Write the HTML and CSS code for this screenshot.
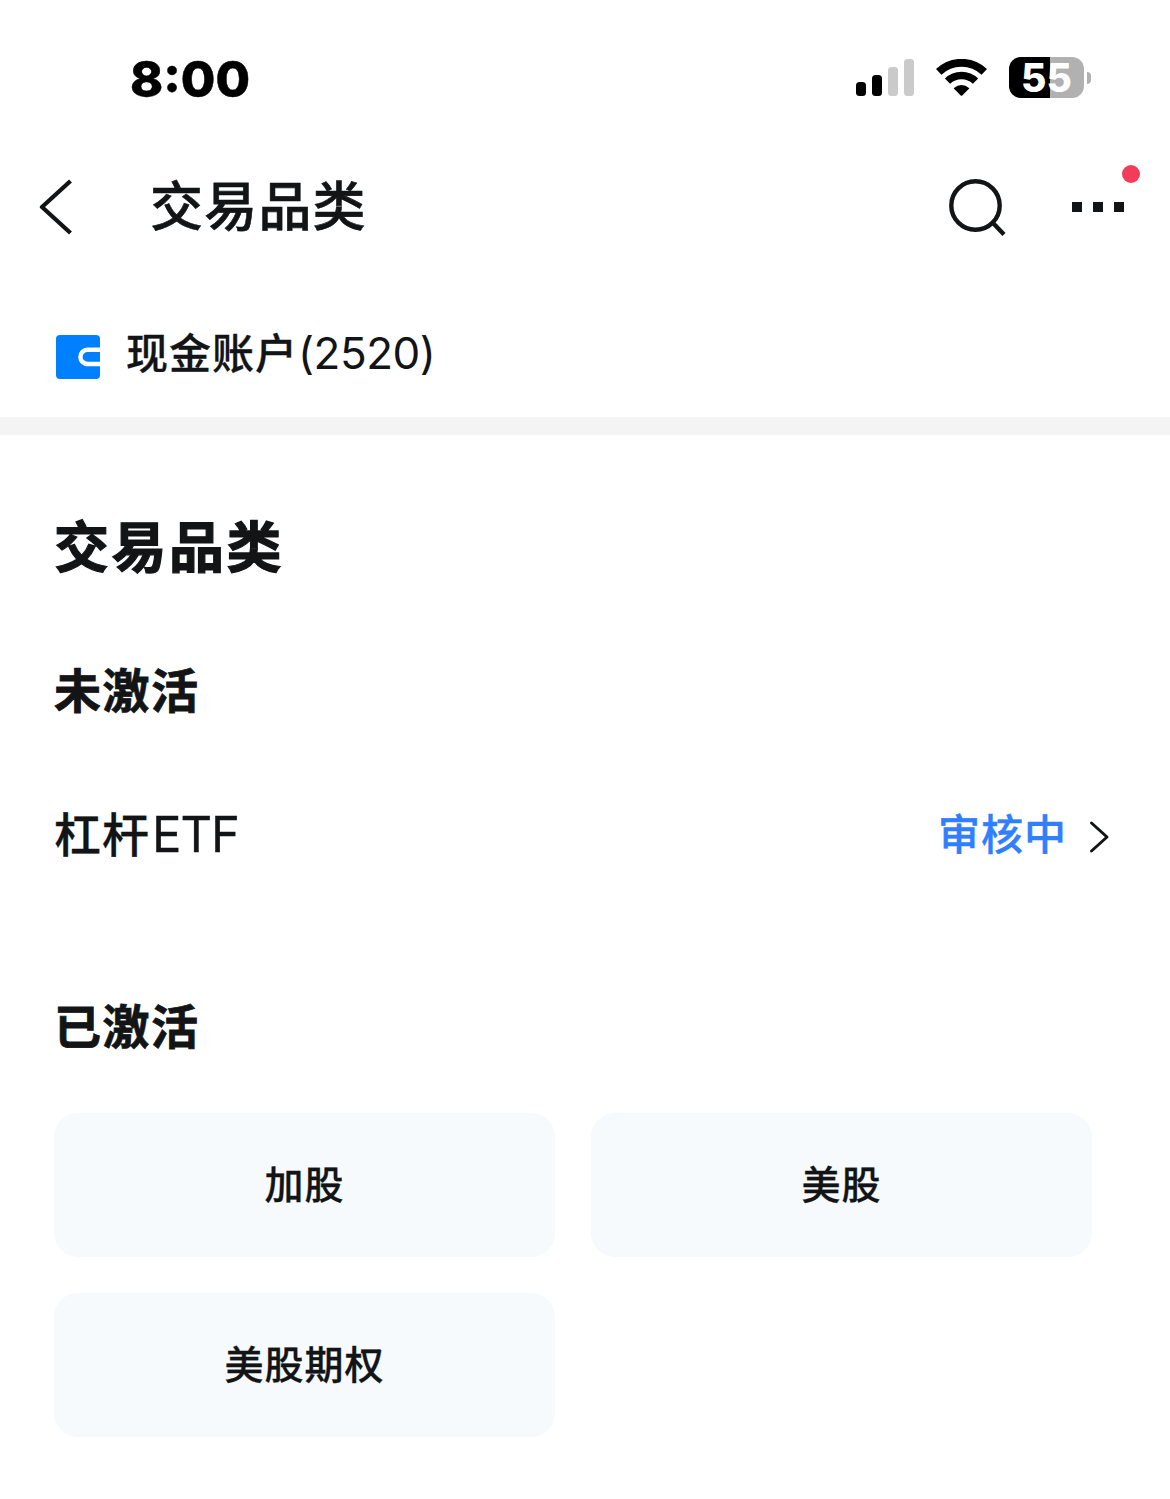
FILE: index.html
```
<!DOCTYPE html>
<html lang="zh-CN">

<head>
    <meta charset="UTF-8">
    <meta name="viewport" content="width=device-width, initial-scale=1.0">
    <title>交易品类</title>
    <link rel="stylesheet" href="styles.css">
</head>

<body>
    <!-- Status bar -->
    <div class="status-bar">
        <span class="time">8:00</span>
        <div class="status-icons">
            <svg class="signal" width="58" height="38" viewBox="0 0 58 38">
                <rect x="0" y="23" width="10" height="14" rx="3.5" />
                <rect x="16" y="16" width="10" height="21" rx="3.5" />
                <rect class="off" x="32" y="8" width="10" height="29" rx="3.5" />
                <rect class="off" x="48" y="0" width="10" height="37" rx="3.5" />
            </svg>
            <svg class="wifi" width="52" height="38" viewBox="0 0 52 38">
                <path d="M2.700 12.900A33 33 0 0 1 48.300 12.900" fill="none" stroke="#000" stroke-width="7.800" />
                <path d="M11.500 22.200A20 20 0 0 1 39.500 22.200" fill="none" stroke="#000" stroke-width="7.400" />
                <path d="M17.600 29.300Q25.500 22.700 33.400 29.300L26.500 36.300Q25.500 37.300 24.500 36.300Z" />
            </svg>
            <div class="battery">
                <div class="battery-body">55</div>
                <div class="battery-cap"></div>
            </div>
        </div>
    </div>

    <!-- Nav bar -->
    <div class="nav">
        <svg class="back" width="34" height="56" viewBox="0 0 34 56">
            <path d="M31.500 2L3 28L31.500 54" fill="none" stroke="#121416" stroke-width="4.300" stroke-linejoin="round" />
        </svg>
        <div class="nav-title">交易品类</div>
        <svg class="search" width="58" height="58" viewBox="0 0 58 58">
            <circle cx="26.500" cy="26.500" r="24.200" fill="none" stroke="#121416" stroke-width="4.400" />
            <path d="M43.500 43.500L55 55.500" stroke="#121416" stroke-width="4.400" />
        </svg>
        <div class="more">
            <i></i><i></i><i></i>
            <span class="badge"></span>
        </div>
    </div>

    <!-- Account -->
    <div class="account">
        <svg width="44" height="44" viewBox="0 0 44 44">
            <rect width="44" height="44" rx="4" fill="#0080ff" />
            <path d="M44 14.800H31.500A7 7 0 0 0 31.500 29H44" fill="none" stroke="#fff" stroke-width="4.400" />
        </svg>
        <div class="account-name">现金账户<span class="account-no">(2520)</span></div>
    </div>
    <div class="divider"></div>

    <div class="content">
        <h1>交易品类</h1>

        <h2>未激活</h2>
        <div class="row">
            <div class="row-name">杠杆<span class="latin">ETF</span></div>
            <div class="row-status">审核中</div>
            <svg class="arrow" width="22" height="34" viewBox="0 0 22 34">
                <path d="M2.500 3L18 17L2.500 31" fill="none" stroke="#121416" stroke-width="3" stroke-linecap="round" stroke-linejoin="round" />
            </svg>
        </div>

        <h2 class="active-title">已激活</h2>
        <div class="cards">
            <div class="card">加股</div>
            <div class="card">美股</div>
            <div class="card">美股期权</div>
        </div>
    </div>
</body>

</html>
```
FILE: styles.css
```
* {
    box-sizing: border-box;
}

body {
    margin: 0;
    min-height: 1499px;
    background-color: #fff;
    color: #121416;
    font-family: "Noto Sans CJK SC", sans-serif;
}

svg {
    display: block;
    flex-shrink: 0;
}

/* Status bar */
.status-bar {
    height: 136px;
    padding: 19px 79px 0 130px;
    display: flex;
    align-items: center;
    justify-content: space-between;
    color: #000;
}

.time {
    padding-top: 2px;
    font-family: Inter, sans-serif;
    font-size: 50px;
    font-weight: 800;
    line-height: 60px;
    -webkit-text-stroke: 0.5px;
}

.status-icons {
    display: flex;
    align-items: center;
}

.signal {
    margin-right: 22px;
}

.signal .off {
    fill: #cacaca;
}

.wifi {
    margin-right: 21px;
}

.battery {
    display: flex;
    align-items: center;
    gap: 3px;
}

.battery-body {
    width: 75px;
    height: 41px;
    border-radius: 12px;
    background: linear-gradient(to right, #000 41px, #b1b1b1 41px);
    color: #fff;
    font-family: Inter, sans-serif;
    font-size: 39px;
    font-weight: 800;
    line-height: 42px;
    text-align: center;
}

.battery-cap {
    width: 4px;
    height: 12px;
    border-radius: 0 4px 4px 0;
    background-color: #b1b1b1;
}

/* Nav bar */
.nav {
    height: 142px;
    padding: 0 46px 0 39px;
    display: flex;
    align-items: center;
}

.nav-title {
    flex: 1;
    margin-left: 77px;
    padding-bottom: 8px;
    font-size: 53px;
    font-weight: 500;
    line-height: 72px;
    letter-spacing: 1.2px;
    -webkit-text-stroke: 0.6px;
}

.search {
    margin: 1px 65px 0 0;
}

.more {
    position: relative;
    display: flex;
    gap: 11px;
}

.more i {
    width: 10px;
    height: 10px;
    background-color: #121416;
}

.badge {
    position: absolute;
    top: -37px;
    right: -16px;
    width: 18px;
    height: 18px;
    border-radius: 50%;
    background-color: #f23c58;
}

/* Account */
.account {
    height: 139px;
    padding: 18px 56px 0;
    display: flex;
    align-items: center;
    gap: 26px;
}

.account-name {
    padding-bottom: 9px;
    font-size: 42px;
    font-weight: 500;
    line-height: 60px;
    letter-spacing: 1px;
    -webkit-text-stroke: 0.3px;
}

.account-no {
    font-family: Inter, sans-serif;
    font-size: 44px;
    font-weight: 400;
    letter-spacing: -0.5px;
    -webkit-text-stroke: 0;
}

.divider {
    height: 18px;
    background-color: #f4f4f4;
}

/* Content */
.content {
    padding: 68px 54px 0;
}

h1 {
    margin: 0;
    font-size: 55px;
    font-weight: 700;
    line-height: 80px;
    letter-spacing: 2.5px;
    -webkit-text-stroke: 1.2px;
}

h2 {
    margin: 71px 0 0;
    font-size: 47px;
    font-weight: 700;
    line-height: 68px;
    letter-spacing: 1.5px;
    -webkit-text-stroke: 0.8px;
}

.row {
    height: 72px;
    margin-top: 76px;
    padding-right: 5px;
    display: flex;
    align-items: center;
}

.row-name {
    flex: 1;
    padding-bottom: 2px;
    font-size: 47px;
    font-weight: 500;
    line-height: 68px;
    letter-spacing: 1px;
    -webkit-text-stroke: 0.3px;
}

.latin {
    margin-left: 2px;
    font-family: Inter, sans-serif;
    font-size: 49px;
    font-weight: 400;
    letter-spacing: -1px;
}

.row-status {
    margin-right: 22px;
    padding-bottom: 4px;
    color: #307fff;
    font-size: 42px;
    font-weight: 500;
    line-height: 60px;
    letter-spacing: 1px;
    -webkit-text-stroke: 0.4px;
}

.arrow {
    margin-top: 5px;
}

.active-title {
    margin-top: 120px;
}

.cards {
    margin-top: 55px;
    padding-right: 24px;
    display: grid;
    grid-template-columns: 1fr 1fr;
    grid-auto-rows: 144px;
    gap: 36px;
}

.card {
    padding-bottom: 6px;
    display: flex;
    align-items: center;
    justify-content: center;
    border-radius: 24px;
    background-color: #f6fafd;
    font-size: 39px;
    font-weight: 500;
    letter-spacing: 1px;
    -webkit-text-stroke: 0.3px;
}
```
